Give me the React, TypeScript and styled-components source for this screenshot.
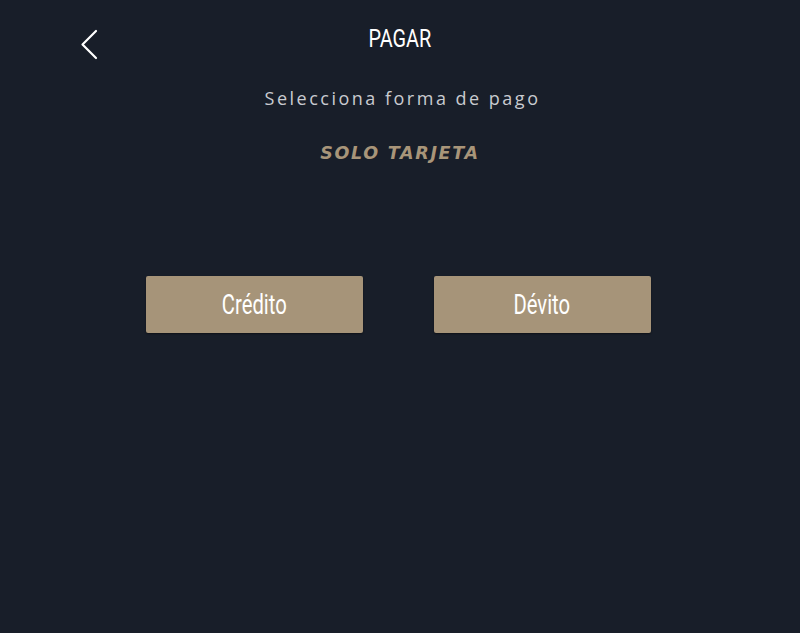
import React from "react";
import styled, { createGlobalStyle } from "styled-components";

const Global = createGlobalStyle`
  html, body { margin: 0; padding: 0; background: #181e29; }
  #root { min-height: 633px; }
`;

const Page = styled.div`
  width: 800px;
  height: 633px;
  background: #181e29;
  display: flex;
  flex-direction: column;
  align-items: center;
  box-sizing: border-box;
`;

const Header = styled.header`
  position: relative;
  width: 100%;
  height: 80px;
  display: flex;
  justify-content: center;
  align-items: flex-start;
  padding-top: 23px;
  box-sizing: border-box;
`;

const BackButton = styled.button`
  position: absolute;
  left: 78px;
  top: 29px;
  background: none;
  border: none;
  padding: 0;
  width: 22px;
  height: 31px;
  cursor: pointer;
  display: flex;
`;

const Condensed = styled.span`
  display: inline-block;
  font-family: "Roboto", "Liberation Sans", sans-serif;
  font-weight: 400;
  transform: scaleX(0.75);
  transform-origin: center;
  white-space: nowrap;
`;

const Title = styled.h1`
  margin: 0;
  font-size: 26.5px;
  line-height: 30px;
  font-weight: 400;
  color: #ffffff;
`;

const Subtitle = styled.p`
  margin: 6px 0 0 5px;
  font-family: "Open Sans", "Liberation Sans", sans-serif;
  font-weight: 400;
  font-size: 18px;
  line-height: 24px;
  letter-spacing: 2.5px;
  color: #c9cbd0;
`;

const Notice = styled.p`
  margin: 31px 0 0;
  font-family: "DejaVu Sans", "Open Sans", sans-serif;
  font-weight: 700;
  font-style: italic;
  font-size: 17.5px;
  line-height: 24px;
  letter-spacing: 1.7px;
  color: #a89579;
`;

const Options = styled.div`
  margin-top: 111px;
  display: flex;
  gap: 71px;
  padding-right: 4px;
`;

const OptionButton = styled.button`
  width: 217px;
  height: 57px;
  background: #a69479;
  border: none;
  border-radius: 2px;
  box-shadow: 0 1px 2px rgba(0, 0, 0, 0.45);
  color: #ffffff;
  font-size: 27px;
  cursor: pointer;
  padding: 0;
  display: flex;
  align-items: center;
  justify-content: center;
`;

const Chevron = () => (
  <svg width="22" height="31" viewBox="0 0 22 31" fill="none">
    <path d="M18 2 L4.5 15.5 L18 29" stroke="#ffffff" strokeWidth="2.2" strokeLinecap="round" strokeLinejoin="round" />
  </svg>
);

export default function App() {
  return (
    <Page>
      <Global />
      <Header>
        <BackButton aria-label="Volver">
          <Chevron />
        </BackButton>
        <Title>
          <Condensed>PAGAR</Condensed>
        </Title>
      </Header>
      <Subtitle>Selecciona forma de pago</Subtitle>
      <Notice>SOLO TARJETA</Notice>
      <Options>
        <OptionButton>
          <Condensed>Crédito</Condensed>
        </OptionButton>
        <OptionButton>
          <Condensed>Dévito</Condensed>
        </OptionButton>
      </Options>
    </Page>
  );
}
